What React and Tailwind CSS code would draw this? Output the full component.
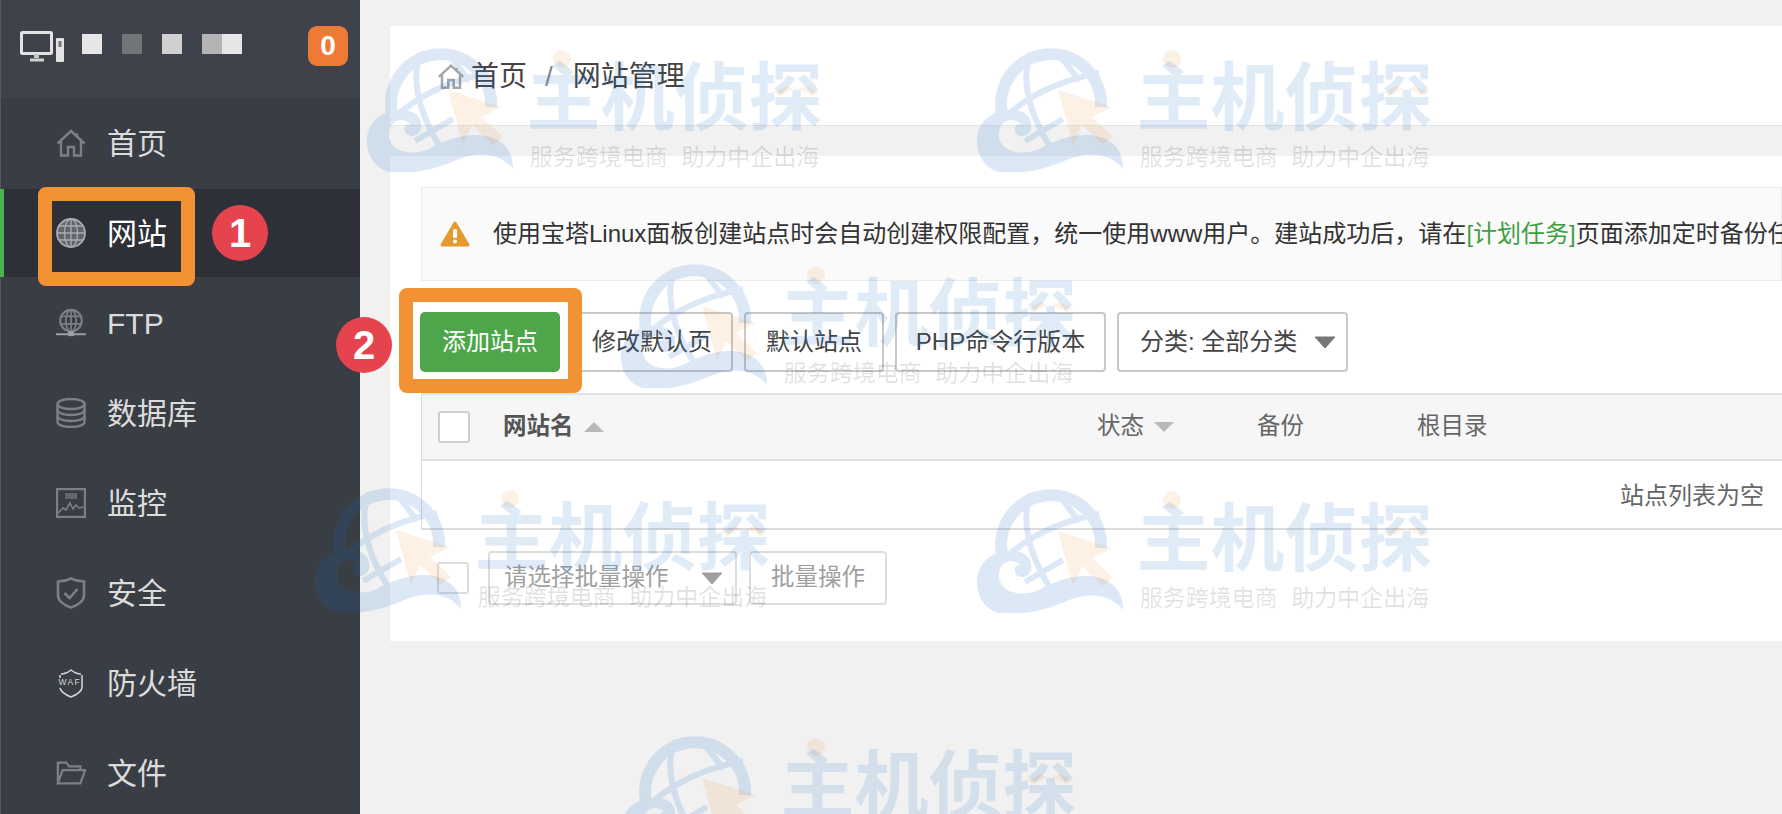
import React from 'react';

const ICON_STROKE = '#7b8086';

const HomeIcon = () => (
  <svg width="30" height="30" viewBox="0 0 30 30" fill="none" stroke={ICON_STROKE} strokeWidth="2.400">
    <path d="M1.500 15.500 15 3l13.500 12.500" />
    <path d="M21 5.500V9" />
    <path d="M5 13v14.500h7V19h6v8.500h7V13" />
  </svg>
);

const GlobeIcon = () => (
  <svg width="30" height="30" viewBox="0 0 30 30" fill="#62666c" stroke="#a9acb0" strokeWidth="1.300">
    <circle cx="15" cy="15" r="14" strokeWidth="1.800" />
    <ellipse cx="15" cy="15" rx="6.500" ry="14" fill="none" />
    <path d="M15 1v28M1 15h28M3 8h24M3 22h24" fill="none" />
  </svg>
);

const FtpIcon = () => (
  <svg width="32" height="30" viewBox="0 0 32 30" fill="none" stroke={ICON_STROKE} strokeWidth="1.800">
    <circle cx="16" cy="12.500" r="11.500" strokeWidth="2.200" />
    <ellipse cx="16" cy="12.500" rx="5.500" ry="11.500" />
    <path d="M16 1v23M5 8h22M5 16h22" />
    <path d="M0 27h32" stroke="#a0a3a7" strokeWidth="2" />
    <rect x="13" y="24" width="6" height="5" fill="#a0a3a7" stroke="none" />
  </svg>
);

const DatabaseIcon = () => (
  <svg width="30" height="30" viewBox="0 0 30 30" fill="none" stroke={ICON_STROKE} strokeWidth="2.400">
    <ellipse cx="15" cy="6" rx="13.500" ry="5" />
    <path d="M1.500 6v18c0 3 6 5 13.500 5s13.500-2 13.500-5V6" />
    <path d="M1.500 12c0 3 6 5 13.500 5s13.500-2 13.500-5M1.500 18c0 3 6 5 13.500 5s13.500-2 13.500-5" />
  </svg>
);

const MonitorIcon = () => (
  <svg width="30" height="30" viewBox="0 0 30 30" fill="none" stroke={ICON_STROKE} strokeWidth="2.400">
    <rect x="1" y="1" width="28" height="28" />
    <path d="M2 25l5-5 3 2 4-7 3 6 3-4 3 3 5-1" strokeWidth="1.600" />
    <rect x="9" y="5" width="12" height="6" fill="#62666c" stroke="none" />
  </svg>
);

const ShieldIcon = () => (
  <svg width="30" height="32" viewBox="0 0 30 32" fill="none" stroke={ICON_STROKE} strokeWidth="2.600">
    <path d="M15 1.500c4 2 8 3 13 3v14c0 5-6 10-13 12C8 28.500 2 23.500 2 18.500v-14c5 0 9-1 13-3z" />
    <path d="M8.500 16l5 5 8-9" />
  </svg>
);

const WafIcon = () => (
  <svg width="26" height="30" viewBox="0 0 26 30" fill="none" stroke="#d8d8d8" strokeWidth="1.500">
    <path d="M3 6c4 0 7-1.500 10-4 3 2.500 6 4 10 4" />
    <path d="M2 20c1 4 6 7 11 9 5-2 10-5 11-9" />
    <path d="M24 7v13M2 7v3" />
    <text x="0.500" y="17" fontSize="8.500" letterSpacing="1.300" fill="#d8d8d8" stroke="none" fontFamily="Liberation Sans, sans-serif">WAF</text>
  </svg>
);

const FolderIcon = () => (
  <svg width="32" height="26" viewBox="0 0 32 26" fill="none" stroke={ICON_STROKE} strokeWidth="2.400">
    <path d="M2 24V2h9l3 4h12v4" />
    <path d="M2 24l5-14h24l-5 14H2z" />
  </svg>
);

const navItems = [
  { label: '首页', icon: <HomeIcon /> },
  { label: '网站', icon: <GlobeIcon />, active: true },
  { label: 'FTP', icon: <FtpIcon /> },
  { label: '数据库', icon: <DatabaseIcon /> },
  { label: '监控', icon: <MonitorIcon /> },
  { label: '安全', icon: <ShieldIcon /> },
  { label: '防火墙', icon: <WafIcon /> },
  { label: '文件', icon: <FolderIcon /> },
];

function Sidebar() {
  return (
    <aside className="w-[360px] shrink-0 bg-[#393d44] border-l border-[#55585c] flex flex-col">
      {/* Header */}
      <div className="h-[98px] shrink-0 bg-[#3e434b] flex items-center pl-[19px] pr-[12px]">
        <svg width="44" height="31" viewBox="0 0 44 31" fill="none" className="-mt-[6px]">
          <rect x="1.500" y="1.500" width="30" height="21" rx="1" stroke="#e3e3e3" strokeWidth="3" />
          <path d="M16.500 23v4" stroke="#c8c8c8" strokeWidth="5" />
          <path d="M10 29h14" stroke="#d0d0d0" strokeWidth="3" />
          <rect x="36" y="7" width="8" height="24" rx="1" fill="#e3e3e3" />
          <rect x="38.500" y="10" width="3" height="6" fill="#777" />
        </svg>
        <div className="flex items-center ml-[18px] -mt-[10px]">
          <span className="w-[20px] h-[20px] bg-[#e6e6e6]" />
          <span className="w-[20px] h-[20px] bg-[#737679] ml-[20px]" />
          <span className="w-[20px] h-[20px] bg-[#cfcfcf] ml-[20px]" />
          <span className="w-[20px] h-[20px] bg-[#b4b4b4] ml-[20px]" />
          <span className="w-[20px] h-[20px] bg-[#e6e6e6]" />
        </div>
        <span className="ml-auto -mt-[6px] w-[40px] h-[40px] rounded-[9px] bg-[#ee7a35] text-white font-bold text-[28px] flex items-center justify-center">
          0
        </span>
      </div>

      {/* Navigation */}
      <nav className="flex flex-col shrink-0">
        {navItems.map((item) =>
          item.active ? (
            <div
              key={item.label}
              className="h-[88px] shrink-0 my-[1px] -ml-px bg-[#2d3037] border-l-4 border-[#4caf50] pl-[52px] flex items-center text-white text-[30px]"
            >
              <span className="w-[30px] flex justify-center">{item.icon}</span>
              <span className="ml-[21px]">{item.label}</span>
            </div>
          ) : (
            <div key={item.label} className="h-[90px] shrink-0 pl-[55px] flex items-center text-[#dcdcdc] text-[30px]">
              <span className="w-[30px] flex justify-center">{item.icon}</span>
              <span className="ml-[21px]">{item.label}</span>
            </div>
          )
        )}
      </nav>
    </aside>
  );
}

const Caret = ({ className }) => (
  <svg width="22" height="13" viewBox="0 0 22 13" className={className}>
    <path d="M1 1h20L11 12z" fill="#777" stroke="#777" strokeLinejoin="round" />
  </svg>
);

const SmallTriangle = ({ up }) => (
  <svg width="20" height="10" viewBox="0 0 20 10">
    <path d={up ? 'M10 0l10 10H0z' : 'M0 0h20L10 10z'} fill="#b9b9b9" />
  </svg>
);

function Toolbar() {
  const btn = 'h-[60px] rounded-[4px] border-2 border-[#c8c8c8] bg-white text-[#444] text-[24px] flex items-center';
  return (
    <div className="mt-[31px] flex gap-[11px] pl-[30px]">
      <button className="w-[140px] h-[60px] rounded-[5px] bg-[#4da64a] text-white text-[24px]">添加站点</button>
      <button className={`${btn} w-[162px] justify-center`}>修改默认页</button>
      <button className={`${btn} w-[140px] justify-center`}>默认站点</button>
      <button className={`${btn} w-[211px] justify-center`}>PHP命令行版本</button>
      <button className={`${btn} w-[231px] justify-between pl-[21px] pr-[10px]`}>
        <span>分类: 全部分类</span>
        <Caret />
      </button>
    </div>
  );
}

function SiteTable() {
  return (
    <div className="mt-[21px] ml-[31px] border-l border-b-2 border-[#dcdcdc]">
      <div className="h-[68px] bg-[#f6f6f6] border-t-2 border-b-2 border-[#e2e2e2] grid grid-cols-[81px_594px_160px_160px_1fr] items-center text-[23.500px] text-[#666]">
        <span className="pl-[16px]">
          <span className="block w-[32px] h-[32px] bg-white border-2 border-[#cfcfcf] rounded-[3px]" />
        </span>
        <span className="flex items-center gap-[10px] font-bold text-[#555]">
          网站名 <SmallTriangle up />
        </span>
        <span className="flex items-center gap-[10px]">
          状态 <SmallTriangle />
        </span>
        <span>备份</span>
        <span>根目录</span>
      </div>
      <div className="h-[67px] flex items-center justify-end pr-[18px] pt-[2px] text-[24px] text-[#666]">站点列表为空</div>
    </div>
  );
}

function BatchBar() {
  return (
    <div className="mt-[21px] ml-[47px] h-[54px] flex items-center opacity-70">
      <span className="block w-[32px] h-[32px] bg-white border-2 border-[#cfcfcf] rounded-[3px]" />
      <div className="ml-[19px] w-[249px] h-[54px] border-2 border-[#d0d0d0] rounded-[4px] flex items-center justify-between pl-[14px] pr-[12px] text-[23.500px] text-[#777]">
        <span>请选择批量操作</span>
        <Caret />
      </div>
      <div className="ml-[12px] w-[138px] h-[54px] border-2 border-[#d0d0d0] rounded-[4px] flex items-center justify-center text-[23.500px] text-[#777]">
        批量操作
      </div>
    </div>
  );
}

function Watermark({ className }) {
  return (
    <div className={`absolute z-10 w-[452px] h-[127px] pointer-events-none ${className}`}>
      <svg width="452" height="127" viewBox="0 0 452 127" className="absolute inset-0">
        <g opacity="0.15" fill="none" stroke="#1e6ec8">
          <path d="M27 76A50 50 0 1 1 124 62" strokeWidth="12" />
          <path d="M54 8C44 30 50 65 72 100" strokeWidth="6" />
          <path d="M78 6c10 10 17 20 24 30" strokeWidth="6" />
          <path d="M24 76C50 50 85 35 122 28" strokeWidth="6" />
          <path d="M48 96l38-22" strokeWidth="6" />
          <path
            stroke="none"
            fill="#1e6ec8"
            d="M0 96C0 76 16 65 34 65c14 0 22 7 20 19-2 8-14 10-16 2-2-6 4-8 6-6-8-10-24-4-22 12 2 14 22 20 40 12 22-12 50-20 70-8 10 6 14 16 14 28-12-16-34-18-54-10-22 10-42 14-62 14C12 128 0 114 0 96z"
          />
        </g>
        <g opacity="0.11" fill="#f0821e">
          <path d="M81 45l54 17-20 10 21 20-10 8-21-20-9 20z" />
          <circle cx="195" cy="14" r="9" />
          <path d="M406 47l14-6 6 3-14 7zM438 41l14 6-6 4-14-7z" />
        </g>
      </svg>
      <div className="relative ml-[163px] w-[289px] pt-[17px] flex flex-col items-center">
        <span className="text-[74px] leading-[74px] font-bold text-[#1e6ec8]/[0.14] whitespace-nowrap">主机侦探</span>
        <span className="mt-[8px] text-[23px] leading-[26px] [word-spacing:7px] text-black/[0.12] whitespace-nowrap">服务跨境电商 助力中企出海</span>
      </div>
    </div>
  );
}

export default function App() {
  return (
    <div className="relative w-[1782px] h-[814px] overflow-hidden flex bg-[#f1f1f1] font-['Liberation_Sans','Noto_Sans_CJK_SC',sans-serif]">
      <Sidebar />

      <main className="flex-1 min-w-0 pl-[30px] pt-[26px]">
        {/* Breadcrumb */}
        <div className="h-[100px] bg-white border-b border-[#e4e4e4] flex items-center pl-[47px] pt-[2px] text-[28px] text-[#444]">
          <svg width="28" height="27" viewBox="0 0 30 30" fill="none" stroke="#a6a6a6" strokeWidth="2.800">
            <path d="M1.500 15.500 15 3l13.500 12.500" />
            <path d="M21 5.500V9" />
            <path d="M5 13v14.500h7V19h6v8.500h7V13" />
          </svg>
          <span className="ml-[6px]">首页</span>
          <span className="ml-[18px] text-[#888]">/</span>
          <span className="ml-[20px]">网站管理</span>
        </div>

        {/* Contenu */}
        <section className="mt-[30px] h-[485px] bg-white overflow-hidden">
          <div className="h-[31px]" />
          <div className="ml-[31px] h-[94px] bg-[#fafafa] border border-[#ebebeb] flex items-center pl-[18px] text-[24px] text-[#333] whitespace-nowrap">
            <svg width="30" height="26" viewBox="0 0 30 26" className="shrink-0">
              <path d="M15 2 28 24H2z" fill="#e6992f" stroke="#e6992f" strokeWidth="3" strokeLinejoin="round" />
              <rect x="13" y="8" width="4" height="9" rx="1.500" fill="#fff" />
              <circle cx="15" cy="20.500" r="2" fill="#fff" />
            </svg>
            <span className="ml-[23px]">
              使用宝塔Linux面板创建站点时会自动创建权限配置，统一使用www用户。建站成功后，请在
              <span className="text-[#3f9e3f]">[计划任务]</span>
              页面添加定时备份任务
            </span>
          </div>
          <Toolbar />
          <SiteTable />
          <BatchBar />
        </section>
      </main>

      {/* Filigranes */}
      <Watermark className="left-[367px] top-[45px]" />
      <Watermark className="left-[977px] top-[45px]" />
      <Watermark className="left-[621px] top-[261px]" />
      <Watermark className="left-[315px] top-[485px]" />
      <Watermark className="left-[977px] top-[486px]" />
      <Watermark className="left-[621px] top-[733px]" />

      {/* Annotations */}
      <div className="absolute z-20 left-[38px] top-[187px] w-[157px] h-[99px] border-[14px] border-[#f39234] rounded-[8px]" />
      <div className="absolute z-20 left-[212px] top-[205px] w-[56px] h-[56px] rounded-full bg-[#e5434e] text-white font-bold text-[40px] flex items-center justify-center">
        1
      </div>
      <div className="absolute z-20 left-[399px] top-[288px] w-[183px] h-[105px] border-[14px] border-[#f39234] rounded-[8px]" />
      <div className="absolute z-20 left-[336px] top-[317px] w-[56px] h-[56px] rounded-full bg-[#e5434e] text-white font-bold text-[40px] flex items-center justify-center">
        2
      </div>
    </div>
  );
}
